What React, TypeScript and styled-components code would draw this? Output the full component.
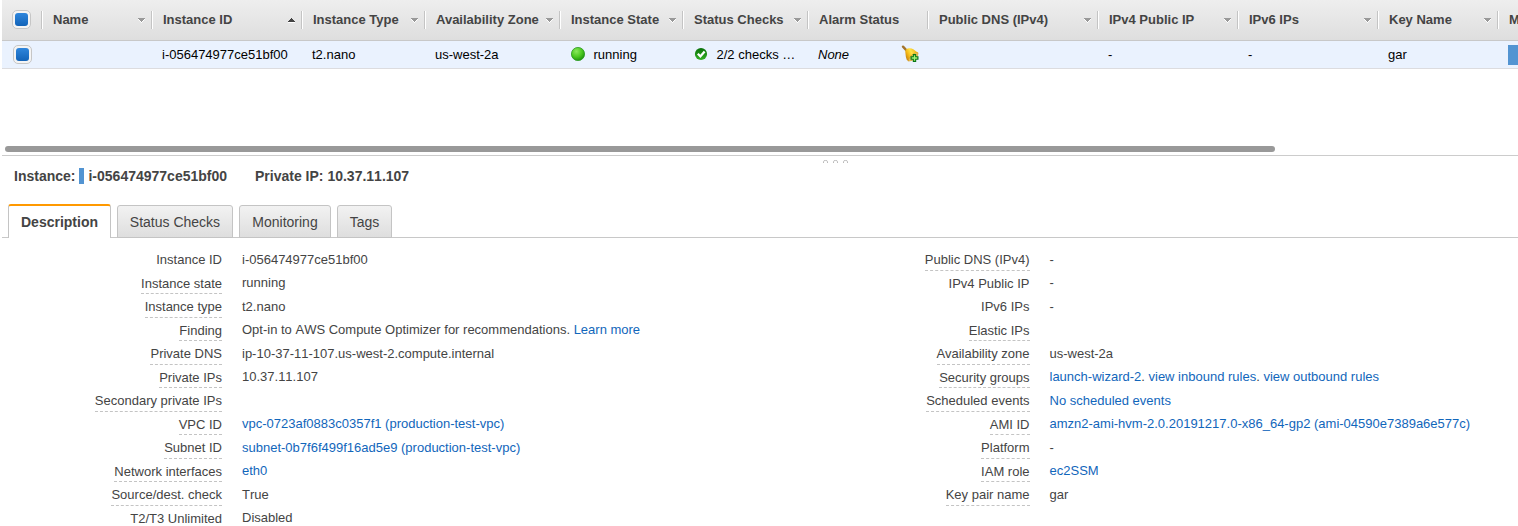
import React from "react";
import styled, { createGlobalStyle } from "styled-components";

const GlobalStyle = createGlobalStyle`
  * { box-sizing: border-box; }
  body {
    margin: 0;
    background: #fff;
    color: #444;
    font: 13px/15px "Liberation Sans", Arial, sans-serif;
    overflow: hidden;
  }
`;

const Page = styled.main`
  height: 526px;
  padding-left: 2px;
  overflow: hidden;
`;

const GridPane = styled.section`
  height: 156px;
  border-bottom: 1px solid #ccc;
  display: flex;
  flex-direction: column;
  overflow: hidden;
`;

const HeaderRow = styled.div`
  display: flex;
  align-items: center;
  height: 41px;
  flex: none;
  border-bottom: 1px solid #c8c8c8;
  background: linear-gradient(#eeeeee, #dedede);
`;

const HeaderCell = styled.div<{ $width: number }>`
  display: flex;
  flex: none;
  align-items: center;
  justify-content: space-between;
  width: ${(p) => p.$width}px;
  height: 18px;
  margin-top: -1px;
  padding: 0 5px 0 11px;
  border-left: 1px solid #c4c4c4;
  box-shadow: inset 1px 0 #fff;
  font-weight: bold;
  white-space: nowrap;
  overflow: hidden;
`;

const CheckCell = styled.div<{ $left: number }>`
  flex: none;
  width: 39px;
  padding-left: ${(p) => p.$left}px;
`;

const Checkbox = styled.div`
  width: 19px;
  height: 19px;
  padding: 2px;
  border: 1px solid #c6c6c6;
  border-radius: 5px;
  background: #f4f4f4;
  &::before {
    content: "";
    display: block;
    width: 13px;
    height: 13px;
    border-radius: 3px;
    background: linear-gradient(#2f86dc, #1263b8);
  }
`;

const HeaderCheckCell = styled(CheckCell)`
  margin-top: -1px;
`;

const DataRow = styled.div`
  display: flex;
  flex: none;
  align-items: center;
  height: 28px;
  border-bottom: 1px solid #dcdcdf;
  background: #eaf2fe;
  color: #000;
`;

const Cell = styled.div<{ $width: number; $italic?: boolean }>`
  display: flex;
  flex: none;
  align-items: center;
  width: ${(p) => p.$width}px;
  height: 20px;
  padding-left: 11px;
  font-style: ${(p) => (p.$italic ? "italic" : "normal")};
  white-space: nowrap;
  overflow: hidden;
`;

const StatusIcon = styled.svg`
  flex: none;
  width: 14px;
  height: 14px;
  margin: 0 8.5px 2px 1px;
`;

const BellIcon = styled.svg`
  flex: none;
  width: 18px;
  height: 18px;
  margin: 0 8px 1px auto;
`;

const Redacted = styled.span<{ $width: number; $height: number }>`
  display: inline-block;
  flex: none;
  width: ${(p) => p.$width}px;
  height: ${(p) => p.$height}px;
  background: #5294d2;
`;

const ScrollThumb = styled.div`
  flex: none;
  width: 1270px;
  height: 6px;
  margin: auto 0 3px 3px;
  border-radius: 3px;
  background: #999;
`;

const Grip = styled.svg`
  display: block;
  width: 28px;
  height: 4px;
  margin: 3px 0 0 819px;
`;

const Summary = styled.h2`
  display: flex;
  align-items: center;
  gap: 28px;
  height: 26px;
  margin: 0;
  padding-left: 12px;
  font-size: 14px;
  line-height: 16px;
  font-kerning: none;
`;

const SummaryItem = styled.span`
  display: flex;
  align-items: center;
  gap: 4px;
`;

const Tabs = styled.div`
  display: flex;
  align-items: flex-end;
  gap: 6px;
  height: 49px;
  padding-left: 6px;
  box-shadow: inset 0 -1px #c8c8c8;
`;

const Tab = styled.div<{ $width: number; $active?: boolean }>`
  width: ${(p) => p.$width}px;
  height: ${(p) => (p.$active ? 34 : 33)}px;
  padding-top: 8px;
  border: 1px solid #c4c4c4;
  border-top: ${(p) => (p.$active ? "2px solid #f90" : "1px solid #c4c4c4")};
  border-bottom: ${(p) => (p.$active ? "0" : "1px solid #c4c4c4")};
  border-radius: 3px 3px 0 0;
  background: ${(p) => (p.$active ? "#fff" : "linear-gradient(#f2f2f2, #dedede)")};
  font-size: 14px;
  line-height: 16px;
  font-weight: ${(p) => (p.$active ? "bold" : "normal")};
  text-align: center;
`;

const Details = styled.div`
  display: grid;
  grid-template-columns: 807.5px 1fr;
  padding-top: 13px;
`;

const Field = styled.div`
  display: flex;
  align-items: flex-start;
  gap: 20px;
  height: 23.5px;
`;

const LabelSlot = styled.div`
  width: 220px;
  flex: none;
  display: flex;
  justify-content: flex-end;
`;

const Label = styled.span<{ $hint: boolean }>`
  height: 19.8px;
  padding-top: 1px;
  border-bottom: ${(p) => (p.$hint ? "1px dashed #c4c4c4" : "0")};
`;

const Value = styled.div`
  padding-top: 0.8px;
  white-space: nowrap;
  font-kerning: none;
`;

const Link = styled.a`
  color: #1166bb;
`;

const columns: { name: string; width: number; sort?: "up" | "down" }[] = [
  { name: "Name", width: 110, sort: "down" },
  { name: "Instance ID", width: 150, sort: "up" },
  { name: "Instance Type", width: 123, sort: "down" },
  { name: "Availability Zone", width: 135, sort: "down" },
  { name: "Instance State", width: 123, sort: "down" },
  { name: "Status Checks", width: 125, sort: "down" },
  { name: "Alarm Status", width: 120 },
  { name: "Public DNS (IPv4)", width: 170, sort: "down" },
  { name: "IPv4 Public IP", width: 140, sort: "down" },
  { name: "IPv6 IPs", width: 140, sort: "down" },
  { name: "Key Name", width: 120, sort: "down" },
  { name: "Monitoring", width: 120 },
];

type FieldData = { label: string; hint?: boolean; value?: React.ReactNode };

const leftFields: FieldData[] = [
  { label: "Instance ID", hint: false, value: "i-056474977ce51bf00" },
  { label: "Instance state", value: "running" },
  { label: "Instance type", value: "t2.nano" },
  {
    label: "Finding",
    value: <>Opt-in to AWS Compute Optimizer for recommendations. <Link>Learn more</Link></>,
  },
  { label: "Private DNS", value: "ip-10-37-11-107.us-west-2.compute.internal" },
  { label: "Private IPs", value: "10.37.11.107" },
  { label: "Secondary private IPs" },
  { label: "VPC ID", value: <Link>vpc-0723af0883c0357f1 (production-test-vpc)</Link> },
  { label: "Subnet ID", value: <Link>subnet-0b7f6f499f16ad5e9 (production-test-vpc)</Link> },
  { label: "Network interfaces", value: <Link>eth0</Link> },
  { label: "Source/dest. check", value: "True" },
  { label: "T2/T3 Unlimited", value: "Disabled" },
];

const rightFields: FieldData[] = [
  { label: "Public DNS (IPv4)", value: "-" },
  { label: "IPv4 Public IP", hint: false, value: "-" },
  { label: "IPv6 IPs", hint: false, value: "-" },
  { label: "Elastic IPs" },
  { label: "Availability zone", value: "us-west-2a" },
  {
    label: "Security groups",
    value: <><Link>launch-wizard-2</Link>. <Link>view inbound rules</Link>. <Link>view outbound rules</Link></>,
  },
  { label: "Scheduled events", value: <Link>No scheduled events</Link> },
  { label: "AMI ID", value: <Link>amzn2-ami-hvm-2.0.20191217.0-x86_64-gp2 (ami-04590e7389a6e577c)</Link> },
  { label: "Platform", value: "-" },
  { label: "IAM role", value: <Link>ec2SSM</Link> },
  { label: "Key pair name", value: "gar" },
];

function SortArrow({ up }: { up: boolean }) {
  return (
    <svg width="9" height="6" viewBox="0 0 9 6" shapeRendering="crispEdges">
      {up ? (
        <>
          <path d="M4 1h1v1h1v1h1v1h1v1H1V4h1V3h1V2h1z" fill="#444" />
          <path d="M1 5h7v1H1z" fill="#fff" />
        </>
      ) : (
        <>
          <path d="M1 2h7v1H7v1H6v1H5v1H4V5H3V4H2V3H1z" fill="#fff" />
          <path d="M1 1h7v1H7v1H6v1H5v1H4V4H3V3H2V2H1z" fill="#999" />
        </>
      )}
    </svg>
  );
}

function RunningDot() {
  return (
    <StatusIcon viewBox="0 0 14 14">
      <defs>
        <radialGradient id="run" cx=".38" cy=".3" r=".7">
          <stop offset="0" stopColor="#8ae85c" />
          <stop offset=".6" stopColor="#4cc820" />
          <stop offset="1" stopColor="#239710" />
        </radialGradient>
      </defs>
      <circle cx="7" cy="7" r="6.6" fill="url(#run)" stroke="#2b9b22" strokeWidth=".8" />
    </StatusIcon>
  );
}

function PassedCheck() {
  return (
    <StatusIcon viewBox="0 0 14 14">
      <defs>
        <linearGradient id="ok" x1="0" y1="0" x2="0" y2="1">
          <stop offset="0" stopColor="#087008" />
          <stop offset="1" stopColor="#35b225" />
        </linearGradient>
      </defs>
      <circle cx="7" cy="7" r="6.1" fill="url(#ok)" />
      <path d="M3.8 6.8 6.4 9.4 10.6 4.5" fill="none" stroke="#fff" strokeWidth="2.3" />
    </StatusIcon>
  );
}

function AddAlarm() {
  return (
    <BellIcon viewBox="0 0 18 18">
      <defs>
        <linearGradient id="bell" x1="0" y1="0.75" x2="1" y2="0.2">
          <stop offset="0" stopColor="#c07c10" />
          <stop offset=".3" stopColor="#f5b915" />
          <stop offset=".55" stopColor="#ffe246" />
          <stop offset="1" stopColor="#e9ac0c" />
        </linearGradient>
      </defs>
      <path d="M2 1.7 5 4.8" stroke="#a2742e" strokeWidth="2.4" strokeLinecap="round" />
      <path d="M4.2 6.2C4.8 4.4 6.2 3.4 8 3.3Q10.5 3.1 12.3 4.3L17 7.8 7.3 16.1Q5.3 15 4.9 12z" fill="url(#bell)" />
      <path d="M7.3 16.1Q7.8 12.8 10.8 10T17 7.8Q17.4 10.6 14.5 13.3T7.3 16.1z" fill="#f0c968" stroke="#d99b17" strokeWidth=".7" />
      <path d="M11.8 9h3.4v2.3h2.3v3.4h-2.3V17h-3.4v-2.3H9.5v-3.4h2.3z" fill="#087513" />
      <path d="M13.5 10.2v5.6M10.7 13h5.6" stroke="#a4f277" strokeWidth="1.3" />
    </BellIcon>
  );
}

function FieldList({ fields }: { fields: FieldData[] }) {
  return (
    <div>
      {fields.map(({ label, hint = true, value }) => (
        <Field key={label}>
          <LabelSlot>
            <Label $hint={hint}>{label}</Label>
          </LabelSlot>
          <Value>{value}</Value>
        </Field>
      ))}
    </div>
  );
}

export default function App() {
  return (
    <Page>
      <GlobalStyle />
      <GridPane>
        <HeaderRow>
          <HeaderCheckCell $left={10}><Checkbox /></HeaderCheckCell>
          {columns.map((c) => (
            <HeaderCell key={c.name} $width={c.width}>
              {c.name}
              {c.sort && <SortArrow up={c.sort === "up"} />}
            </HeaderCell>
          ))}
        </HeaderRow>
        <DataRow>
          <CheckCell $left={11}><Checkbox /></CheckCell>
          <Cell $width={110} />
          <Cell $width={150}>i-056474977ce51bf00</Cell>
          <Cell $width={123}>t2.nano</Cell>
          <Cell $width={135}>us-west-2a</Cell>
          <Cell $width={123}><RunningDot />running</Cell>
          <Cell $width={125}><PassedCheck />2/2 checks …</Cell>
          <Cell $width={120} $italic>None<AddAlarm /></Cell>
          <Cell $width={170} />
          <Cell $width={140}>-</Cell>
          <Cell $width={140}>-</Cell>
          <Cell $width={120}>gar</Cell>
          <Cell $width={120}><Redacted $width={40} $height={20} /></Cell>
        </DataRow>
        <ScrollThumb />
      </GridPane>
      <Grip viewBox="0 0 28 4">
        {[4.5, 14.5, 24.5].map((x) => (
          <path key={x} d={`M${x - 2} 4V2.5Q${x - 2} 1.5 ${x} 1.5T${x + 2} 2.5V4`} fill="none" stroke="#bbb" />
        ))}
      </Grip>
      <Summary>
        <SummaryItem>
          Instance:
          <Redacted $width={5} $height={16} />
          i-056474977ce51bf00
        </SummaryItem>
        <SummaryItem>Private IP: 10.37.11.107</SummaryItem>
      </Summary>
      <Tabs>
        <Tab $width={103} $active>Description</Tab>
        <Tab $width={116}>Status Checks</Tab>
        <Tab $width={92}>Monitoring</Tab>
        <Tab $width={55}>Tags</Tab>
      </Tabs>
      <Details>
        <FieldList fields={leftFields} />
        <FieldList fields={rightFields} />
      </Details>
    </Page>
  );
}
